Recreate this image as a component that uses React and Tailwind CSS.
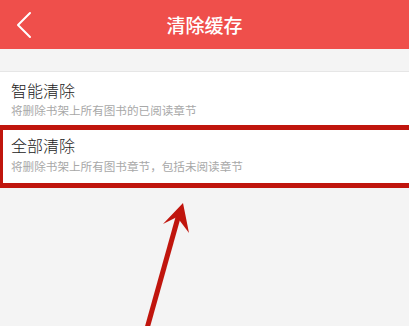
export default function App() {
  return (
    <div
      className="relative w-full h-[326px] overflow-hidden bg-[#f4f4f4]"
      style={{ fontFamily: '"Noto Sans CJK SC", "Noto Sans", sans-serif' }}
    >
      <div className="relative h-[49px] bg-[#ef4f4b] flex items-center justify-center">
        <svg className="absolute left-[14px] top-[10px]" width="20" height="30" viewBox="0 0 20 30">
          <polyline points="16,3 4,15 16,27" fill="none" stroke="#ffffff" strokeWidth="2" strokeLinecap="round" strokeLinejoin="round" />
        </svg>
        <span className="text-white text-[19px] font-medium leading-none">清除缓存</span>
      </div>
      <div className="h-[22px]" />
      <div className="border-t border-[#e6e6e6] bg-white px-[11px] pt-[8px] pb-[7px] flex flex-col gap-[2px]">
        <span className="text-[16px] font-light leading-[20px] text-[#222222]">智能清除</span>
        <span className="text-[11.6px] leading-[16px] text-[#a8a8a8]">将删除书架上所有图书的已阅读章节</span>
      </div>
      <div className="bg-white border-l-[3px] border-y-[5px] border-[#c0150d] pl-[8px] pt-[5px] pb-[9px] flex flex-col gap-[3px]">
        <span className="text-[16px] font-light leading-[20px] text-[#222222]">全部清除</span>
        <span className="text-[11.6px] leading-[16px] text-[#a8a8a8]">将删除书架上所有图书章节，包括未阅读章节</span>
      </div>
      <svg className="absolute left-0 top-0 pointer-events-none" width="409" height="326" viewBox="0 0 409 326">
        <line x1="146" y1="332" x2="179" y2="214" stroke="#c0150d" strokeWidth="5" />
        <polygon points="183,203 163,224 177,217 189,233" fill="#c0150d" />
      </svg>
    </div>
  );
}
